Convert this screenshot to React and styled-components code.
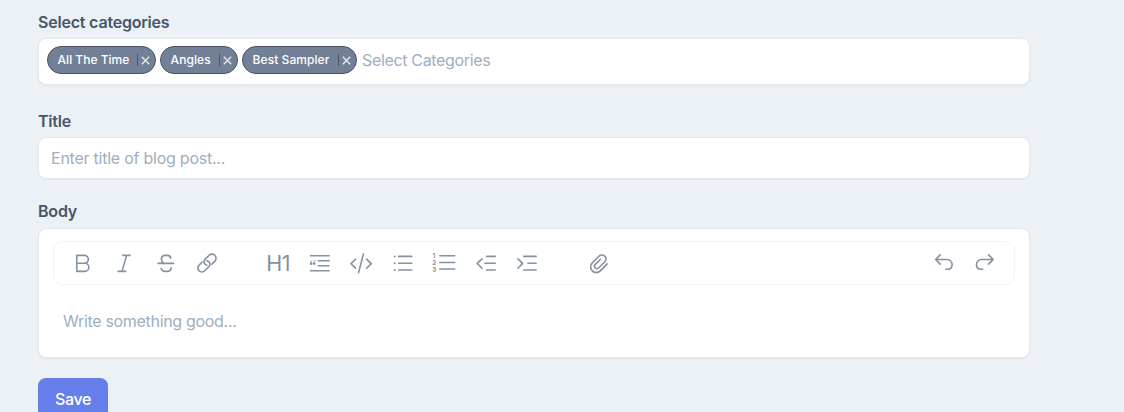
import React from "react";
import styled, { createGlobalStyle } from "styled-components";

const Global = createGlobalStyle`
  *, *::before, *::after { box-sizing: border-box; }
  body {
    margin: 0;
    height: 412px;
    overflow: hidden;
    background: #ebf1f5;
    color: #4a5568;
    font: 400 16px/24px Inter, "Liberation Sans", sans-serif;
  }
`;

const Form = styled.form`
  display: flex;
  flex-direction: column;
  width: 992px;
  margin: 10px 0 0 38px;
`;

const Field = styled.div`
  display: flex;
  flex-direction: column;
  margin-bottom: ${(p) => p.$after}px;
`;

const Label = styled.label`
  height: 24px;
  margin-bottom: ${(p) => p.$gap || 4}px;
  font-size: 16px;
  font-weight: 600;
  letter-spacing: -0.2px;
  white-space: nowrap;
`;

const Panel = styled.div`
  height: ${(p) => p.$height}px;
  border: 1px solid #e2e8f0;
  border-radius: 8px;
  background: #fff;
  box-shadow: 0 1px 2px rgba(0, 0, 0, 0.05);
`;

const TagInput = styled(Panel)`
  display: flex;
  align-items: flex-start;
  gap: 4px;
  padding: 7px 8px;
`;

const TextInput = styled(Panel)`
  display: flex;
  align-items: center;
  padding: 0 12px;
`;

const Editor = styled(Panel)`
  padding: 12px 14px;
`;

const Tag = styled.span`
  display: flex;
  align-items: center;
  justify-content: space-between;
  width: ${(p) => p.$width}px;
  height: 28px;
  padding: 0 5px 0 9.6px;
  border: 1px solid #4a5568;
  border-radius: 14px;
  background: #718096;
  color: #fff;
  font-size: 12px;
  font-weight: 500;
  letter-spacing: ${(p) => p.$track}px;
  white-space: nowrap;
`;

const Remove = styled.span`
  display: flex;
  align-items: center;
  justify-content: flex-end;
  width: 13px;
  height: 12px;
  border-left: 1px solid #4a5568;
`;

const Placeholder = styled.span`
  color: #a0aec0;
  letter-spacing: ${(p) => p.$track};
  white-space: nowrap;
`;

const TagPlaceholder = styled(Placeholder)`
  margin: 2px 0 0 1px;
`;

const EditorText = styled.div`
  display: flex;
  padding: 24px 10px 0;
`;

const Toolbar = styled.div`
  display: flex;
  align-items: center;
  justify-content: space-between;
  width: 962px;
  height: 44px;
  padding: 0 0 0 17px;
  border: 1px solid #f1f3f5;
  border-radius: 10px;
`;

const Groups = styled.div`
  display: flex;
  gap: 30px;
`;

const Group = styled.div`
  display: flex;
`;

const Tool = styled.span`
  display: flex;
  align-items: center;
  justify-content: center;
  width: 41.4px;
  padding-right: 17.4px;
  height: 24px;
  color: #8590a0;
`;

const ToolIcon = styled.svg`
  flex: none;
  width: 24px;
  height: 24px;
  overflow: visible;
  fill: none;
  stroke: currentColor;
  stroke-width: 1.6;
  stroke-linecap: round;
  stroke-linejoin: round;
`;

const Heading = styled.span`
  flex: none;
  margin-right: 1px;
  font-size: 21.5px;
  line-height: 24px;
  letter-spacing: -0.6px;
`;

const Digit = styled.text`
  fill: currentColor;
  stroke: none;
  font: 700 6px Inter, sans-serif;
`;

const SaveButton = styled.button`
  width: 70px;
  height: 42px;
  padding: 0;
  border: 0;
  border-radius: 8px;
  background: #667eea;
  color: #fff;
  font: 500 16px/24px Inter, sans-serif;
  letter-spacing: -0.4px;
`;

const Cross = () => (
  <svg width="9" height="9" viewBox="0 0 9 9" fill="none" stroke="#e2e8f0" strokeWidth="1.4">
    <path d="M.8.8 8.2 8.2M8.2.8.8 8.2" />
  </svg>
);

const icons = {
  bold: <path d="M5.8 4.4h7.6a3.9 3.9 0 0 1 0 7.9H5.8zM5.8 12.3h8a4 4 0 0 1 0 8.1h-8z" />,
  italic: <path d="M10.8 4.4h7.3M6.2 20.4h7.5M14.6 4.4 10 20.4" />,
  strike: (
    <path d="M4.2 12.4h15.5M16.7 7c-.3-1.7-1.7-2.6-3.7-2.6h-1.8c-2.3 0-3.8 1.4-3.8 3.8 0 1.9.7 3.2 2.2 4.2M7.2 17.6c.5 1.8 1.9 2.8 4 2.8h1.9c2.4 0 4-1.2 4-3.6" />
  ),
  link: (
    <path d="M11.9 14.2c-2.8-.5-3.8-3.5-1.9-5.6l4.1-4.3a3.9 3.9 0 0 1 5.6 0l.2.2a3.9 3.9 0 0 1 0 5.6l-3.1 3.1M12.1 9.9c2.8.5 3.8 3.5 1.9 5.6l-4.3 4.3a3.9 3.9 0 0 1-5.6 0 3.9 3.9 0 0 1 0-5.7L7.2 11" />
  ),
  quote: (
    <>
      <path d="M2.4 4.8h18.7M10.3 9.8h10.8M10.3 14.8h10.8M2.4 19.8h18.7" />
      <path
        d="M4 9.5c-1.2.7-1.8 2-1.6 3.3M7.1 9.5c-1.2.7-1.8 2-1.6 3.3"
        strokeWidth="1"
      />
      <g fill="currentColor" stroke="none">
        <circle cx="3.3" cy="12.7" r="1.2" />
        <circle cx="6.4" cy="12.7" r="1.2" />
      </g>
    </>
  ),
  code: <path d="M6.5 8.2 2 12.6l4.5 4.6M17.6 8.2l4.6 4.4-4.6 4.6M14.4 3.1 9.6 21.6" />,
  bullets: (
    <>
      <path d="M7.6 5.4h13.2M7.6 12.3h13.2M7.6 19h13.2" />
      <path d="M3.7 5.4h.01M3.7 12.3h.01M3.7 19h.01" strokeWidth="2" />
    </>
  ),
  numbers: (
    <>
      <path d="M7.8 4.8h14.9M7.8 11.5h14.9M7.8 18h14.9" />
      <Digit x="0.5" y="7">1</Digit>
      <Digit x="0.2" y="14">2</Digit>
      <Digit x="0.2" y="20.7">3</Digit>
    </>
  ),
  outdent: <path d="M8 7.8 3.2 12.4 8 17.2M12.6 5.4h8.6M11 12.3h10.2M12.6 19h8.6" />,
  indent: <path d="M2.9 7.8l4.8 4.6-4.8 4.8M8.8 5.4h12.3M13 12.3h8.1M8.8 19h12.3" />,
  clip: (
    <path d="m21.2 12.9-6.9 7a5.6 5.6 0 0 1-8 0 5.6 5.6 0 0 1 0-8l6.6-6.7a4 4 0 0 1 5.8 0 4 4 0 0 1 0 5.8L12.5 17a2.4 2.4 0 0 1-3.4 0 2.4 2.4 0 0 1 0-3.4l5.4-5.3" />
  ),
  undo: <path d="M9.2 3.9 4.6 8.5l4.6 4.6M4.6 8.5h11.5a5 5 0 0 1 5 5c0 2.8-1.8 4.8-4.5 4.8h-1.8" />,
  redo: <path d="m15.6 3.9 4.6 4.6-4.6 4.6M20.2 8.5H8.5a5 5 0 0 0-5 5c0 2.8 1.8 4.8 4.5 4.8h1.6" />,
};

const toolGroups = [
  ["bold", "italic", "strike", "link"],
  ["h1", "quote", "code", "bullets", "numbers", "outdent", "indent"],
  ["clip"],
];

const ToolGroup = ({ names }) => (
  <Group>
    {names.map((name) => (
      <Tool key={name}>
        {name === "h1" ? <Heading>H1</Heading> : <ToolIcon viewBox="0 0 24 24">{icons[name]}</ToolIcon>}
      </Tool>
    ))}
  </Group>
);

const tags = [
  { name: "All The Time", width: 109, track: 0 },
  { name: "Angles", width: 78, track: 0.06 },
  { name: "Best Sampler", width: 115, track: 0.06 },
];

export default function App() {
  return (
    <>
      <Global />
      <Form>
        <Field $after={24}>
          <Label>Select categories</Label>
          <TagInput $height={47}>
            {tags.map((tag) => (
              <Tag key={tag.name} $width={tag.width} $track={tag.track}>
                {tag.name}
                <Remove>
                  <Cross />
                </Remove>
              </Tag>
            ))}
            <TagPlaceholder $track="-0.34px">Select Categories</TagPlaceholder>
          </TagInput>
        </Field>
        <Field $after={20}>
          <Label>Title</Label>
          <TextInput $height={42}>
            <Placeholder $track="-0.24px">Enter title of blog post...</Placeholder>
          </TextInput>
        </Field>
        <Field $after={20}>
          <Label $gap={5}>Body</Label>
          <Editor $height={130}>
            <Toolbar>
              <Groups>
                {toolGroups.map((names) => (
                  <ToolGroup key={names[0]} names={names} />
                ))}
              </Groups>
              <ToolGroup names={["undo", "redo"]} />
            </Toolbar>
            <EditorText>
              <Placeholder $track="-0.31px">Write something good...</Placeholder>
            </EditorText>
          </Editor>
        </Field>
        <SaveButton type="button">Save</SaveButton>
      </Form>
    </>
  );
}
